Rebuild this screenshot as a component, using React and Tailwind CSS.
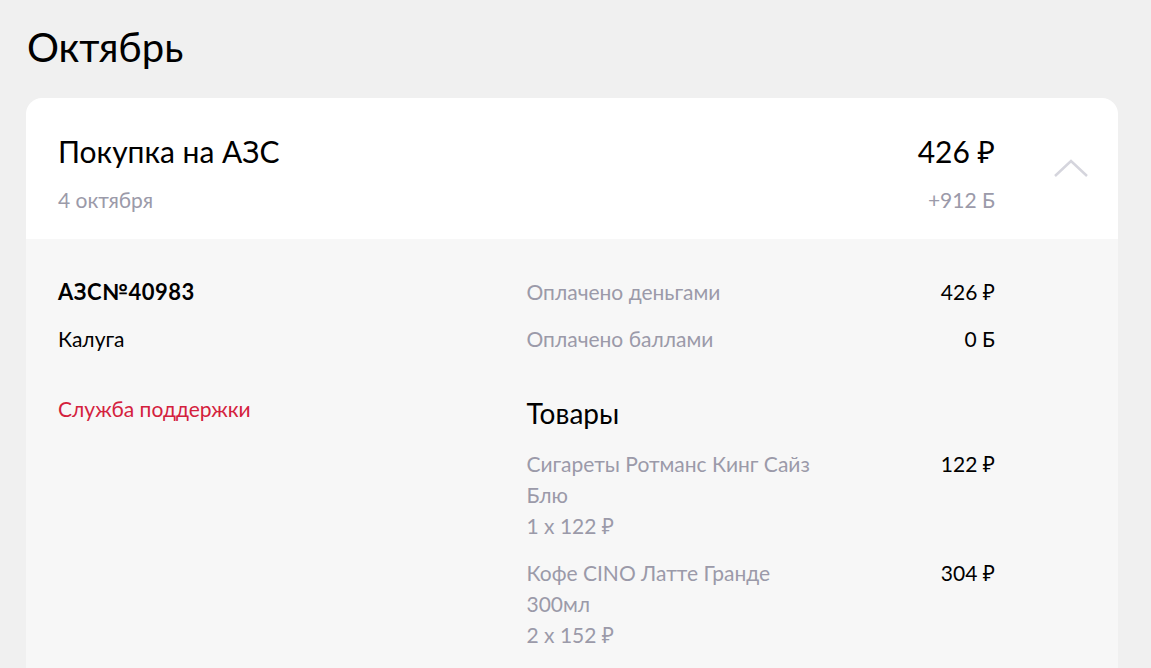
import React from "react";

const ITEMS = [
  { name: "Сигареты Ротманс Кинг Сайз Блю", qty: "1 x 122 ₽", total: "122 ₽" },
  { name: "Кофе CINO Латте Гранде 300мл", qty: "2 x 152 ₽", total: "304 ₽" },
];

const ChevronUp = () => (
  <svg width="36" height="20" viewBox="0 0 36 20" fill="none">
    <path d="M2 18 L18 3 L34 18" stroke="#d5d5dd" strokeWidth="2.5" />
  </svg>
);

export default function App() {
  return (
    <div
      className="min-h-[668px] bg-[#f0f0f0] pl-[26px] pr-[33px]"
      style={{ fontFamily: "Lato, 'Noto Sans', sans-serif" }}
    >
      {/* Month */}
      <h1 className="pt-[22px] pb-[26px] text-[40px] leading-[50px] pl-[1px] text-black">
        Октябрь
      </h1>

      <div className="rounded-t-[16px] overflow-hidden">
        {/* Header */}
        <div className="flex bg-white h-[141px]">
          <div className="flex-1 pl-[32px] pt-[35px]">
            <div className="text-[30px] leading-[36px] text-black">Покупка на АЗС</div>
            <div className="text-[21px] leading-[26px] mt-[18px] text-[#9b9aa9]">4 октября</div>
          </div>
          <div className="pt-[35px] text-right">
            <div className="text-[30px] leading-[36px] text-black">426 ₽</div>
            <div className="text-[21px] leading-[26px] mt-[18px] text-[#9b9aa9]">+912 Б</div>
          </div>
          <div className="w-[123px] flex justify-end pr-[29px] pt-[60px]">
            <ChevronUp />
          </div>
        </div>

        {/* Details */}
        <div className="bg-[#f7f7f7] pl-[32px] pr-[123px] pt-[38px] pb-[40px] grid grid-cols-2">
          <div className="text-[21px]">
            <div className="text-[22px] font-bold tracking-[0.5px] leading-[30px] text-black">АЗС№40983</div>
            <div className="leading-[30px] mt-[17px] text-black">Калуга</div>
            <div className="leading-[30px] mt-[40px] text-[#d4213d]">Служба поддержки</div>
          </div>
          <div className="text-[21px]">
            <div className="flex justify-between leading-[30px]">
              <span className="text-[#9b9aa9]">Оплачено деньгами</span>
              <span className="text-black">426 ₽</span>
            </div>
            <div className="flex justify-between leading-[30px] mt-[17px]">
              <span className="text-[#9b9aa9]">Оплачено баллами</span>
              <span className="text-black">0 Б</span>
            </div>
            <div className="text-[28px] leading-[34px] mt-[42px] text-black">Товары</div>
            <div className="mt-[18px] flex flex-col gap-[16px]">
              {ITEMS.map((item) => (
                <div key={item.name} className="flex justify-between leading-[31px]">
                  <div className="w-[290px] text-[#9b9aa9]">
                    <div>{item.name}</div>
                    <div>{item.qty}</div>
                  </div>
                  <span className="text-black">{item.total}</span>
                </div>
              ))}
            </div>
          </div>
        </div>
      </div>
    </div>
  );
}
